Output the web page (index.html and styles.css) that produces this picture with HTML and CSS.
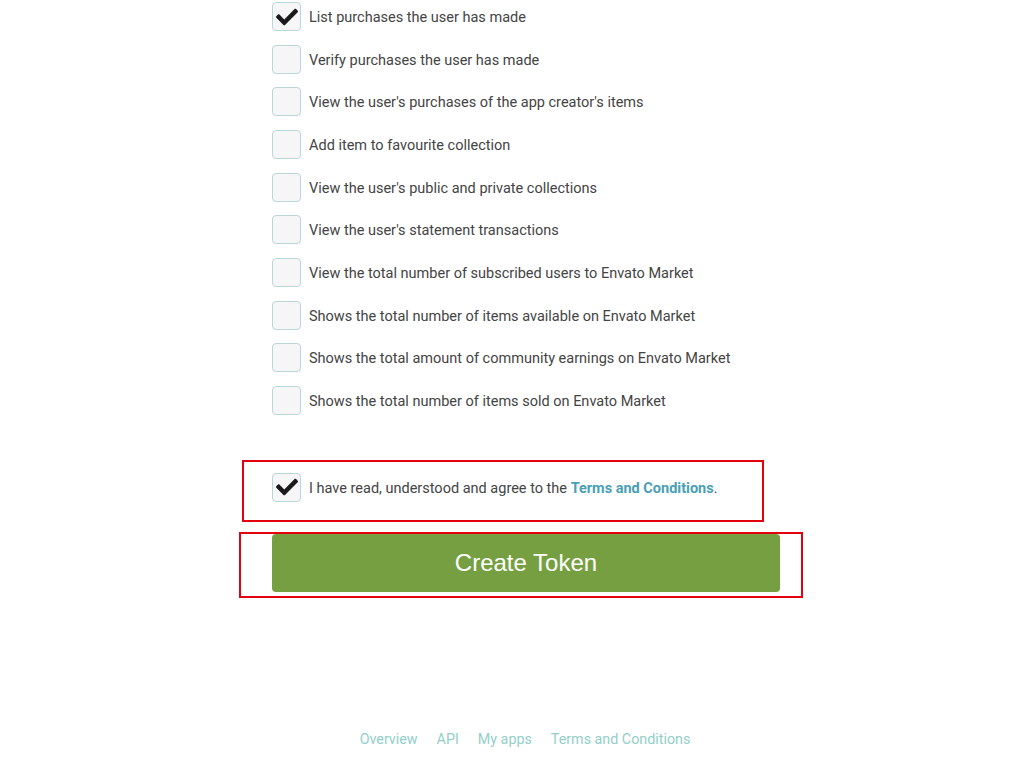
FILE: index.html
```html
<!DOCTYPE html>
<html lang="en">
<head>
  <meta charset="UTF-8">
  <meta name="viewport" content="width=device-width, initial-scale=1.0">
  <title>Create Token</title>
  <link rel="stylesheet" href="styles.css">
</head>
<body>

  <div class="page">
    <form class="token-form">
      <ul class="perm-list">
        <li class="perm-row"><span class="box checked"><svg viewBox="0 0 512 512"><path d="M173.9 439.4l-166.4-166.4c-10-10-10-26.2 0-36.2l36.2-36.2c10-10 26.2-10 36.2 0L192 312.7 432.1 72.6c10-10 26.2-10 36.2 0l36.2 36.2c10 10 10 26.2 0 36.2l-294.4 294.4c-10 10-26.2 10-36.2 0z"/></svg></span><span class="label">List purchases the user has made</span></li>
        <li class="perm-row"><span class="box"></span><span class="label">Verify purchases the user has made</span></li>
        <li class="perm-row"><span class="box"></span><span class="label">View the user's purchases of the app creator's items</span></li>
        <li class="perm-row"><span class="box"></span><span class="label">Add item to favourite collection</span></li>
        <li class="perm-row"><span class="box"></span><span class="label">View the user's public and private collections</span></li>
        <li class="perm-row"><span class="box"></span><span class="label">View the user's statement transactions</span></li>
        <li class="perm-row"><span class="box"></span><span class="label">View the total number of subscribed users to Envato Market</span></li>
        <li class="perm-row"><span class="box"></span><span class="label">Shows the total number of items available on Envato Market</span></li>
        <li class="perm-row"><span class="box"></span><span class="label">Shows the total amount of community earnings on Envato Market</span></li>
        <li class="perm-row"><span class="box"></span><span class="label">Shows the total number of items sold on Envato Market</span></li>
      </ul>

      <div class="perm-row agree">
        <span class="box checked"><svg viewBox="0 0 512 512"><path d="M173.9 439.4l-166.4-166.4c-10-10-10-26.2 0-36.2l36.2-36.2c10-10 26.2-10 36.2 0L192 312.7 432.1 72.6c10-10 26.2-10 36.2 0l36.2 36.2c10 10 10 26.2 0 36.2l-294.4 294.4c-10 10-26.2 10-36.2 0z"/></svg></span>
        <span class="label">I have read, understood and agree to the <a href="#" class="terms">Terms and Conditions</a>.</span>
        <div class="mark mark-agree"></div>
      </div>

      <div class="submit-wrap">
        <button type="button" class="create-btn">Create Token</button>
        <div class="mark mark-button"></div>
      </div>
    </form>

    <footer class="footer">
      <a href="#">Overview</a>
      <a href="#">API</a>
      <a href="#">My apps</a>
      <a href="#">Terms and Conditions</a>
    </footer>
  </div>

</body>
</html>
```

FILE: styles.css
```css
body {
  margin: 0;
  background-color: #fff;
  font-family: Roboto, "Liberation Sans", Arial, sans-serif;
  font-size: 14.5px;
  color: #444;
}

.page {
  width: 1024px;
}

.token-form {
  margin-left: 272px;
  width: 508px;
  padding-top: 2px;
}

.perm-list {
  list-style: none;
  margin: 0;
  padding: 0;
}

.perm-row {
  display: flex;
  align-items: center;
  gap: 8px;
  height: 29px;
  margin-bottom: 13.67px;
  white-space: nowrap;
}

.label {
  padding-top: 2px;
}

.box {
  box-sizing: border-box;
  width: 29px;
  height: 29px;
  flex-shrink: 0;
  border: 1px solid #b9d7d8;
  border-radius: 4px;
  background-color: #f6f6f6;
  display: flex;
  align-items: center;
  justify-content: center;
}

.box svg {
  width: 22px;
  height: 22px;
  fill: #1a1a1a;
}

.agree {
  position: relative;
  margin-top: 58px;
  margin-bottom: 0;
}

.terms {
  color: #4aa0b5;
  font-weight: bold;
  text-decoration: none;
}

.submit-wrap {
  position: relative;
  margin-top: 32px;
}

.create-btn {
  display: block;
  width: 508px;
  height: 58px;
  border: none;
  border-radius: 4px;
  background-color: #769f42;
  color: #fff;
  font-family: "Liberation Sans", Arial, sans-serif;
  font-size: 24px;
  cursor: pointer;
}

/* red highlight frames drawn over the screenshot */
.mark {
  position: absolute;
  border: 2px solid #e3000f;
  box-sizing: border-box;
  pointer-events: none;
}

.mark-agree {
  left: -30px;
  top: -13px;
  width: 522px;
  height: 62px;
}

.mark-button {
  left: -33px;
  top: -2px;
  width: 564px;
  height: 66px;
}

.footer {
  display: flex;
  justify-content: center;
  gap: 19px;
  margin-top: 139px;
  padding-left: 26px;
}

.footer a {
  color: #92cfc8;
  text-decoration: none;
  font-size: 14.3px;
}
```
